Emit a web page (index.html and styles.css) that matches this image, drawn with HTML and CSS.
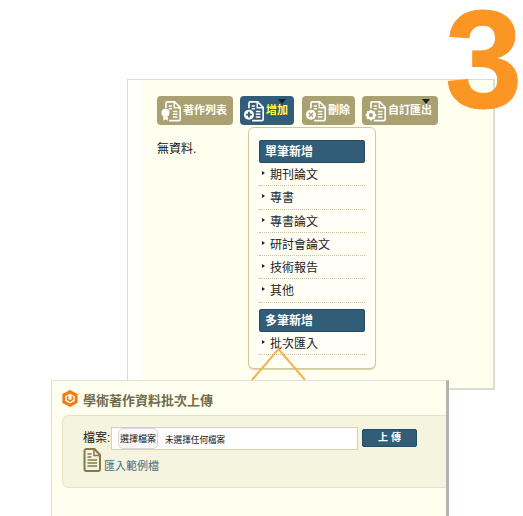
FILE: index.html
```html
<!DOCTYPE html>
<html lang="zh-Hant">
<head>
<meta charset="utf-8">
<title>學術著作資料批次上傳</title>
<link rel="stylesheet" href="styles.css">
</head>
<body>
<svg class="defs" width="0" height="0" aria-hidden="true">
  <symbol id="doc" viewBox="0 0 24 24">
    <path d="M6.500 9V3.500a1.500 1.500 0 0 1 1.500-1.500h8l6 6v13a1.500 1.500 0 0 1-1.500 1.500H10" fill="none" stroke="currentColor" stroke-width="1.800" stroke-linejoin="round"/>
    <path d="M15.500 2v6.500H22" fill="none" stroke="currentColor" stroke-width="1.500"/>
    <path d="M9.500 6.500h3.500M9.500 9.500h3.500M14 12.500h5M14 15.500h5M14 18.500h5" stroke="currentColor" stroke-width="1.500"/>
  </symbol>
</svg>
<main class="stage">
  <div class="step">3</div>

  <section class="window">
    <div class="gutter"></div>
    <div class="content">
      <nav class="toolbar">
        <a class="tool tool-list">
          <svg class="tool-icon" viewBox="0 0 24 24"><use href="#doc"/><circle cx="6" cy="14" r="4.400" fill="currentColor"/><path d="M3.500 18v4.500l2.500-1.500 2.500 1.500V18z" fill="currentColor"/></svg>
          <span>著作列表</span>
        </a>
        <a class="tool tool-add is-active">
          <svg class="tool-icon" viewBox="0 0 24 24"><use href="#doc"/><circle cx="6.500" cy="16" r="5.500" fill="currentColor"/><path d="M6.500 12.800v6.400M3.300 16h6.400" stroke="#315d78" stroke-width="2"/></svg>
          <span>增加</span>
          <i class="caret"></i>
        </a>
        <a class="tool tool-del">
          <svg class="tool-icon" viewBox="0 0 24 24"><use href="#doc"/><circle cx="6.500" cy="16" r="5.500" fill="currentColor"/><path d="M4.300 13.800l4.400 4.400M8.700 13.800l-4.400 4.400" stroke="#a9a172" stroke-width="1.600"/></svg>
          <span>刪除</span>
        </a>
        <a class="tool tool-export">
          <svg class="tool-icon" viewBox="0 0 24 24"><use href="#doc"/><circle cx="6.500" cy="16.500" r="3.600" fill="none" stroke="currentColor" stroke-width="2.800"/><path d="M6.500 10.700v2M6.500 20.300v2M.7 16.500h2M10.300 16.500h2M2.400 12.400l1.400 1.400M9.200 19.200l1.400 1.400M2.400 20.600l1.400-1.400M9.200 13.800l1.400-1.400" stroke="currentColor" stroke-width="2.200"/></svg>
          <span>自訂匯出</span>
          <i class="caret"></i>
        </a>
      </nav>
      <p class="empty">無資料.</p>
    </div>
  </section>

  <div class="menu">
    <h3 class="menu-head">單筆新增</h3>
    <ul class="menu-list">
      <li>期刊論文</li>
      <li>專書</li>
      <li>專書論文</li>
      <li>研討會論文</li>
      <li>技術報告</li>
      <li>其他</li>
    </ul>
    <h3 class="menu-head">多筆新增</h3>
    <ul class="menu-list">
      <li>批次匯入</li>
    </ul>
  </div>

  <section class="upload">
    <h2 class="upload-title">
      <svg class="hex" viewBox="0 0 16 17"><path d="M8 0l7.600 4v9L8 17 .4 13V4z" fill="#f07d14"/><path d="M3.300 6.300L8 3.800l4.700 2.500v4.600L8 13.500l-4.700-2.600z" fill="#fffff0"/><path d="M5.600 6.200v3.300L8 10.900l2.400-1.400V6.200" fill="none" stroke="#f07d14" stroke-width="1.700"/></svg>
      <span>學術著作資料批次上傳</span>
    </h2>
    <form class="upload-box">
      <div class="file-row">
        <label class="file-label">檔案:</label>
        <div class="file-input">
          <span class="file-btn">選擇檔案</span>
          <span class="file-none">未選擇任何檔案</span>
        </div>
        <span class="submit">上 傳</span>
      </div>
      <a class="sample">
        <svg class="sample-icon" viewBox="0 0 18 24"><path d="M1.500 3a2 2 0 0 1 2-2h8l5.500 6v14a2 2 0 0 1-2 2H3.500a2 2 0 0 1-2-2z" fill="none" stroke="#85794a" stroke-width="2" stroke-linejoin="round"/><path d="M11 1v6.500h6" fill="none" stroke="#85794a" stroke-width="1.500"/><path d="M4.500 6h4M4.500 9h4M4.500 12h9.500M4.500 15h9.500M4.500 18h9.500" stroke="#85794a" stroke-width="1.400"/></svg>
        <span>匯入範例檔</span>
      </a>
    </form>
  </section>

  <svg class="callout" viewBox="0 0 56 32"><path d="M1 32L27.500 1 54 32" fill="none" stroke="#f7b04e" stroke-width="2"/></svg>
</main>
</body>
</html>
```

FILE: styles.css
```css
* { box-sizing: border-box; }
html, body { margin: 0; padding: 0; background: #fff; overflow: hidden; }
body { font-family: "Liberation Sans", "Noto Sans CJK TC", sans-serif; color: #222; }
.defs { position: absolute; }
.stage { position: relative; width: 523px; height: 516px; overflow: hidden; }

.step {
  position: absolute; left: 445px; top: 7px; width: 77px;
  font: 700 139px/104px "Liberation Sans", sans-serif;
  color: #fb9624; z-index: 1;
  -webkit-text-stroke: 1px #fb9624;
}

.window {
  position: absolute; left: 127px; top: 79px; width: 368px; height: 311px;
  display: flex; background: #fff; border: 1px solid #dcdcd4; border-right-width: 2px; border-bottom-width: 2px;
}
.gutter { width: 14px; flex: none; }
.content { flex: 1; background: #ffffef; padding: 16px 0 0 15px; }

.toolbar { display: flex; gap: 7px; align-items: flex-start; }
.tool {
  position: relative; height: 29px; display: flex; align-items: center; gap: 1px;
  padding: 0 3px; border-radius: 4px; background: #a9a172; color: #fff;
  font-size: 11px; font-weight: 700; white-space: nowrap;
}
.tool span { padding-bottom: 3px; }
.tool-list { width: 76px; }
.tool-add { width: 54px; }
.tool-del { width: 53px; margin-left: 1px; }
.tool-export { width: 76px; }
.is-active { background: #315d78; }
.is-active span { color: #ffff3c; }
.tool-icon { width: 22px; height: 22px; flex: none; }
.caret {
  position: absolute; right: 8px; top: 3px; width: 0; height: 0;
  border-left: 4.500px solid transparent; border-right: 4.500px solid transparent; border-top: 5px solid #14222c;
}
.empty { margin: 17px 0 0; font-size: 12px; line-height: 14px; color: #111; }

.menu {
  position: absolute; left: 248px; top: 127px; width: 128px; height: 242px;
  padding: 12px 10px 0 10px; background: #fffff6; border: 1px solid #cfc9a0; border-radius: 6px;
  box-shadow: 0 1px 1px #d8d3b0;
}
.menu-head {
  margin: 0; height: 23px; padding-left: 5px; background: #315d78; border: 1px solid #264c64; border-radius: 2px;
  color: #fff; font-size: 12px; font-weight: 700; line-height: 22px;
}
.menu-list { list-style: none; margin: 0 0 6px; padding: 0; }
.menu-list li {
  position: relative; height: 23.300px; padding: 1px 0 0 11px; line-height: 22px; font-size: 12px; color: #222;
  border-bottom: 1px dotted #c9c29c;
}
.menu-list li::before {
  content: ""; position: absolute; left: 3px; top: 8px;
  border-left: 3px solid #222; border-top: 2.500px solid transparent; border-bottom: 2.500px solid transparent;
}

.upload {
  position: absolute; left: 51px; top: 380px; width: 398px; height: 150px;
  background: #ffffef; border: 1px solid #e2e2da; border-right: 3px solid #b4b4ac; z-index: 2;
}
.upload-title {
  display: flex; align-items: center; gap: 5px; height: 34px; margin: 0; padding: 3px 0 0 10px;
  font-size: 13px; font-weight: 700; color: #6e6a4c;
}
.hex { width: 16px; height: 17px; flex: none; margin-top: -3px; }
.upload-title span { margin-top: -1px; }
.upload-box {
  height: 73px; margin-left: 10px; padding: 11px 0 0 20px;
  background: #f5f4de; border: 1px solid #e4e2c4; border-right: 0; border-radius: 7px 0 0 7px;
}
.file-row { display: flex; align-items: center; height: 23px; }
.file-label { width: 28px; font-size: 12px; color: #222; padding-bottom: 4px; }
.file-input {
  width: 247px; height: 23px; display: flex; align-items: center; gap: 7px; padding-left: 6px;
  background: #fff; border: 1px solid #d8d4a4; font-size: 8.600px; color: #111;
}
.file-btn {
  width: 40px; height: 21px; line-height: 21px; text-align: center; background: #f8f8f8;
  border: 1px solid #d8d8d8; border-radius: 5px; font-size: 9px;
}
.submit {
  width: 55px; height: 18px; margin: 0 0 1px 4px; background: #315d78; border: 1px solid #264c64; border-radius: 2px;
  color: #fff; font-size: 10px; font-weight: 700; line-height: 15px; text-align: center;
}
.sample { display: flex; align-items: flex-end; gap: 3px; margin-top: -2px; color: #44708a; font-size: 11px; }
.sample-icon { width: 18px; height: 24px; flex: none; }
.sample span { line-height: 14px; margin-bottom: -1px; }

.callout { position: absolute; left: 251px; top: 348px; width: 56px; height: 32px; z-index: 3; }
```
